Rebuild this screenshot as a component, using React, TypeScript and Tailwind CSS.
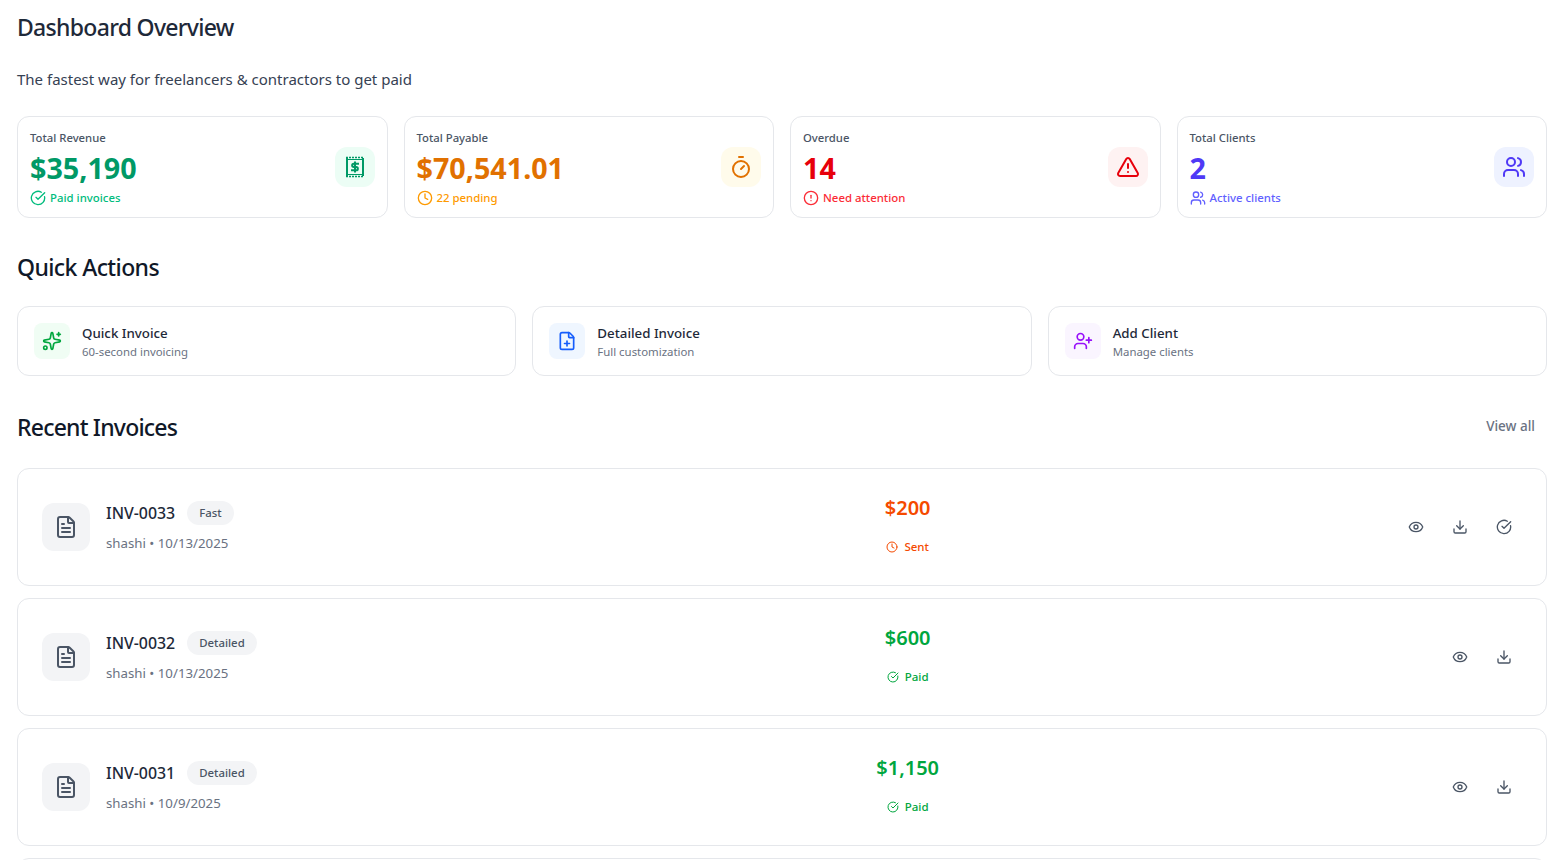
import {
  CircleAlert,
  CircleCheckBig,
  Clock,
  Download,
  Eye,
  FilePlus,
  FileText,
  Sparkles,
  Timer,
  TriangleAlert,
  UserPlus,
  Users,
} from "lucide-react";

// 영수증 모양 아이콘 (패키지에 맞는 게 없음)
function ReceiptIcon({ className }: { className?: string }) {
  return (
    <svg viewBox="0 0 24 24" fill="none" stroke="currentColor" strokeWidth="2" className={className}>
      <path d="M4 3v18M20 3v18" />
      <path d="M3 2.5h18M3 21.5h18" strokeWidth="1.6" strokeDasharray="2 1" />
      <path d="M4 4.5h16M4 19.5h16" strokeWidth="1.2" />
      <path d="M16 8.7h-5.2a1.65 1.65 0 0 0 0 3.3h2.4a1.65 1.65 0 0 1 0 3.3H8M12 6.5v11" strokeWidth="2" />
    </svg>
  );
}

const stats = [
  { label: "Total Revenue", value: "$35,190", note: "Paid invoices", valueColor: "text-[#009966]", noteColor: "text-[#00bc7d]", tint: "bg-[#ecfdf5]", Icon: ReceiptIcon, NoteIcon: CircleCheckBig },
  { label: "Total Payable", value: "$70,541.01", note: "22 pending", valueColor: "text-[#e17100]", noteColor: "text-[#fe9a00]", tint: "bg-[#fffbeb]", Icon: Timer, NoteIcon: Clock },
  { label: "Overdue", value: "14", note: "Need attention", valueColor: "text-[#e7000b]", noteColor: "text-[#fb2c36]", tint: "bg-[#fef2f2]", Icon: TriangleAlert, NoteIcon: CircleAlert },
  { label: "Total Clients", value: "2", note: "Active clients", valueColor: "text-[#4f39f6]", noteColor: "text-[#615fff]", tint: "bg-[#eef2ff]", Icon: Users, NoteIcon: Users },
];

const actions = [
  { title: "Quick Invoice", desc: "60-second invoicing", tint: "bg-[#f0fdf4]", color: "text-[#00a63e]", Icon: Sparkles },
  { title: "Detailed Invoice", desc: "Full customization", tint: "bg-[#eff6ff]", color: "text-[#155dfc]", Icon: FilePlus },
  { title: "Add Client", desc: "Manage clients", tint: "bg-[#faf5ff]", color: "text-[#9810fa]", Icon: UserPlus },
];

const invoices = [
  { id: "INV-0033", type: "Fast", meta: "shashi • 10/13/2025", amount: "$200", status: "Sent" },
  { id: "INV-0032", type: "Detailed", meta: "shashi • 10/13/2025", amount: "$600", status: "Paid" },
  { id: "INV-0031", type: "Detailed", meta: "shashi • 10/9/2025", amount: "$1,150", status: "Paid" },
];

function App() {
  return (
    <div className="h-screen overflow-hidden bg-white pl-[17px] pr-[20px] font-['Noto_Sans',sans-serif]">
      <h1 className="pt-[10px] text-[23px] leading-[34px] font-medium tracking-[-0.7px] text-[#1e2939]">Dashboard Overview</h1>
      <p className="mt-[23px] text-[15px] leading-[24px] text-[#364153]">The fastest way for freelancers &amp; contractors to get paid</p>

      {/* 통계 카드 */}
      <div className="mt-[25px] grid grid-cols-4 gap-4">
        {stats.map(({ label, value, note, valueColor, noteColor, tint, Icon, NoteIcon }) => (
          <div key={label} className="flex h-[102px] items-center justify-between rounded-xl border border-[#e5e7eb] px-3">
            <div className="pt-[2px]">
              <div className="text-[11.3px] leading-[16px] font-medium text-[#4a5565]">{label}</div>
              <div className={`mt-[4px] text-[28.7px] leading-[36px] font-bold ${valueColor}`}>{value}</div>
              <div className={`mt-[4px] flex items-center gap-1 text-[11.4px] leading-[16px] font-medium ${noteColor}`}>
                <NoteIcon className="h-4 w-4" />
                {note}
              </div>
            </div>
            <div className={`flex h-10 w-10 items-center justify-center rounded-xl ${tint} ${valueColor}`}>
              <Icon className="h-6 w-6" />
            </div>
          </div>
        ))}
      </div>

      <h2 className="mt-[31px] text-[23px] leading-[36px] font-medium tracking-[-0.6px] text-[#101828]">Quick Actions</h2>

      {/* 빠른 작업 */}
      <div className="mt-[21px] grid grid-cols-3 gap-4">
        {actions.map(({ title, desc, tint, color, Icon }) => (
          <div key={title} className="flex h-[70px] items-center gap-3 rounded-xl border border-[#e5e7eb] px-4">
            <div className={`flex h-9 w-9 items-center justify-center rounded-lg ${tint} ${color}`}>
              <Icon className="h-5 w-5" />
            </div>
            <div className="pt-[1px]">
              <div className="text-[13.3px] leading-[20px] font-medium text-[#1e2939]">{title}</div>
              <div className="mt-[1px] text-[11.4px] leading-[16px] text-[#6a7282]">{desc}</div>
            </div>
          </div>
        ))}
      </div>

      <div className="mt-[33px] flex items-center justify-between">
        <h2 className="text-[23px] leading-[36px] font-medium tracking-[-0.8px] text-[#101828]">Recent Invoices</h2>
        <span className="mr-3 -translate-y-[1px] text-[13.5px] leading-[20px] font-medium text-[#6a7282]">View all</span>
      </div>

      {/* 최근 인보이스 */}
      <div className="mt-[23px] flex flex-col gap-3">
        {invoices.map(({ id, type, meta, amount, status }, i) => {
          const sent = status === "Sent";
          const tone = sent ? "text-[#f54a00]" : "text-[#00a63e]";
          return (
            <div key={id} className="grid h-[118px] grid-cols-12 items-center gap-4 rounded-xl border border-[#e5e7eb] px-6">
              <div className="col-span-6 flex items-center gap-4">
                <div className="flex h-12 w-12 items-center justify-center rounded-xl bg-[#f3f4f6] text-[#4a5565]">
                  <FileText className="h-6 w-6" />
                </div>
                <div>
                  <div className="flex items-center gap-3">
                    <span className="text-[15.9px] leading-[24px] font-medium text-[#1e2939]">{id}</span>
                    <span className="rounded-full bg-[#f3f4f6] px-3 py-1 text-[11.4px] leading-[16px] font-medium text-[#4a5565]">{type}</span>
                  </div>
                  <div className="mt-[8px] text-[13.25px] leading-[20px] text-[#6a7282]">{meta}</div>
                </div>
              </div>
              <div className="col-span-2 flex flex-col items-center pb-[2px] pl-[2px]">
                <div className={`text-xl leading-[28px] font-semibold ${tone}`}>{amount}</div>
                <div className={`mt-[13px] flex h-6 items-center gap-[6px] text-[11.5px] leading-[16px] font-medium ${tone}`}>
                  {sent ? <Clock className="h-3 w-3" /> : <CircleCheckBig className="h-3 w-3" />}
                  {status}
                </div>
              </div>
              <div className="col-span-4 flex items-center justify-end gap-2 text-[#4a5565]">
                <span className="flex h-9 w-9 items-center justify-center"><Eye className="h-4 w-4" /></span>
                <span className="flex h-9 w-9 items-center justify-center"><Download className="h-4 w-4" /></span>
                {i === 0 && <span className="flex h-9 w-9 items-center justify-center"><CircleCheckBig className="h-4 w-4" /></span>}
              </div>
            </div>
          );
        })}
        <div className="h-[118px] rounded-xl border border-[#e5e7eb]" />
      </div>
    </div>
  );
}

export default App;
